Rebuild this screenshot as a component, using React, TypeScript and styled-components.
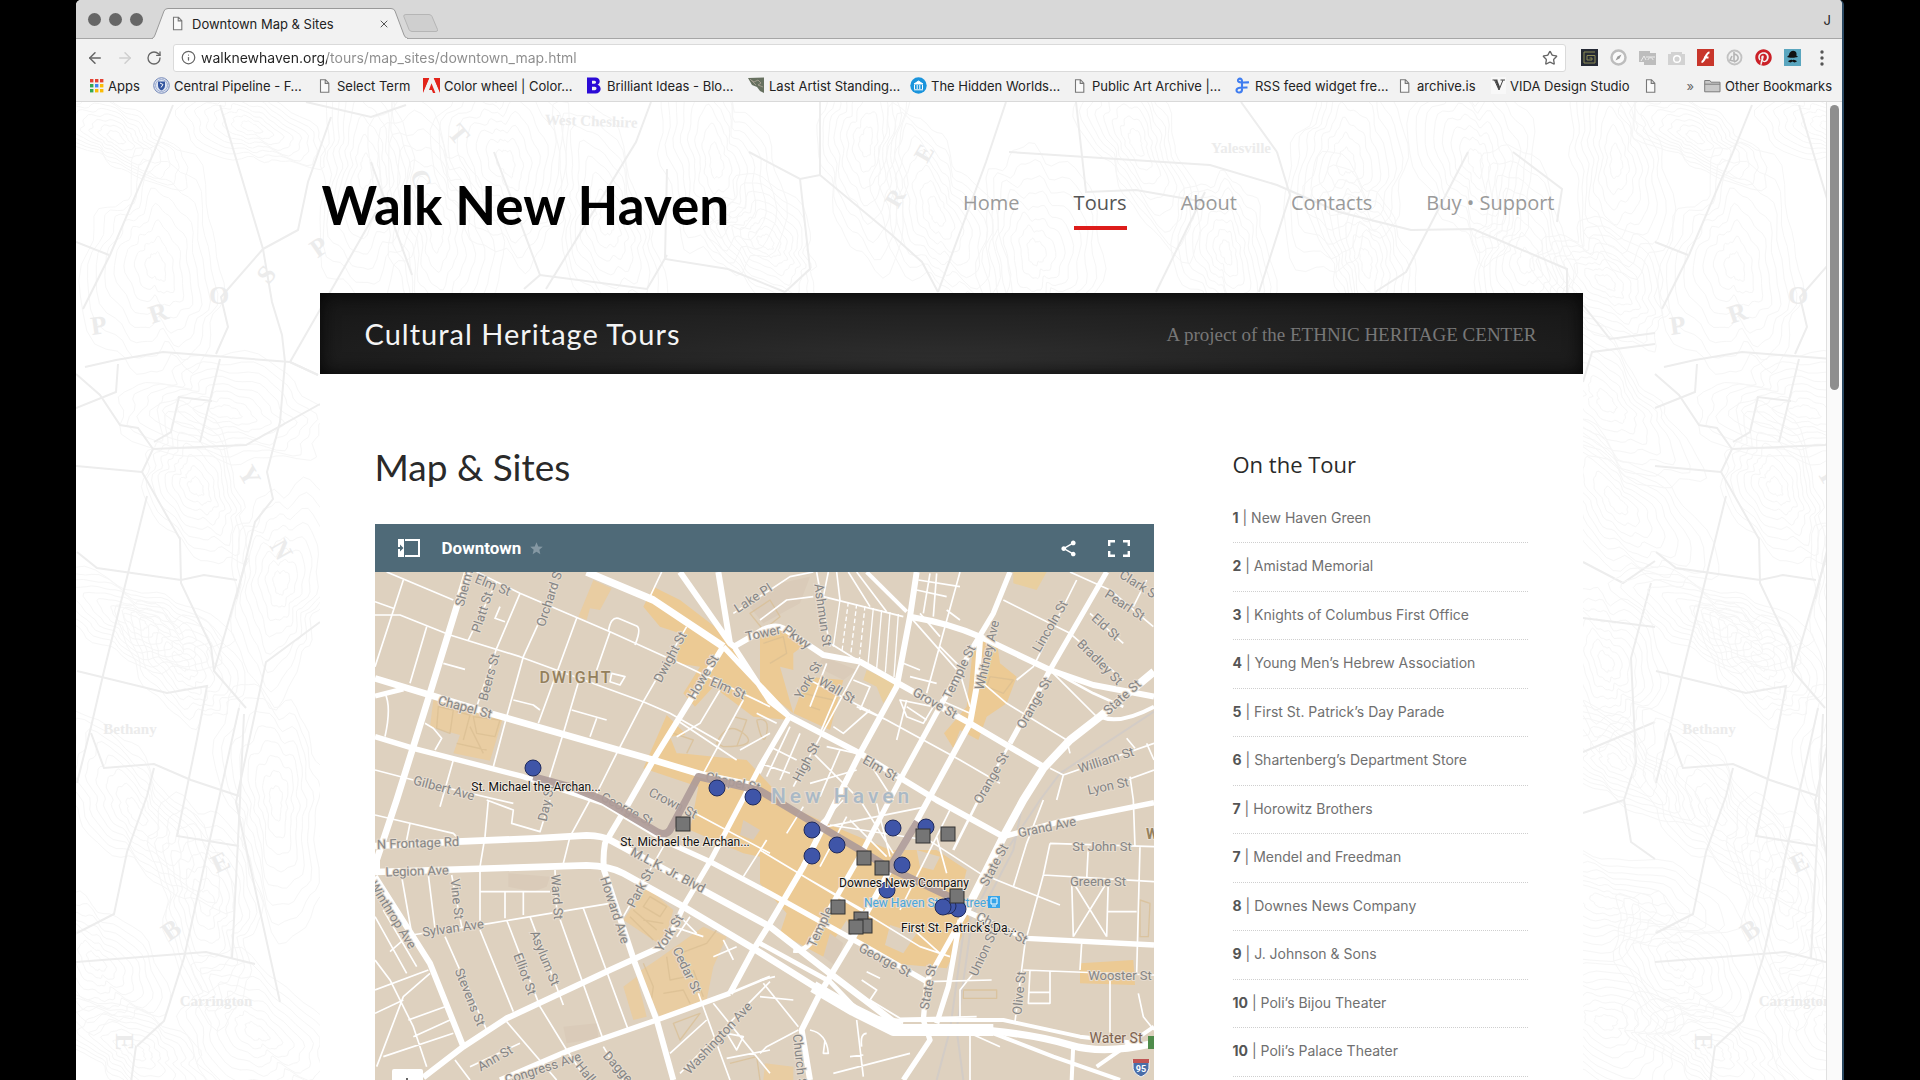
import React from 'react';
import styled, { createGlobalStyle } from 'styled-components';
import { ArrowLeft, ArrowRight, Info, RotateCw, Star, X } from 'lucide-react';
import { FaPinterest } from 'react-icons/fa';
import { MdShare, MdStar } from 'react-icons/md';

const GlobalStyle = createGlobalStyle`
  * { box-sizing: border-box; }
  body { margin: 0; background: #000; font-family: Lato, "Open Sans", sans-serif; }
  h1, h2, h3, p, ol { margin: 0; padding: 0; font-weight: 400; }
  a { color: inherit; text-decoration: none; }
  button { border: 0; padding: 0; background: none; font: inherit; color: inherit; cursor: pointer; }
`;

const ui = 'Inter, "Open Sans", sans-serif';
const site = '"Open Sans", Lato, sans-serif';

/* ---------- browser window ---------- */

const Desktop = styled.div`
  height: 100vh;
  overflow: hidden;
  padding: 0 76px;
  background: #000;
`;

const Window = styled.div`
  height: 100%;
  display: flex;
  flex-direction: column;
  background: #f2f2f2;
  border-right: 2px solid #2c4a63;
  border-radius: 5px 5px 0 0;
  overflow: hidden;
`;

const TabStrip = styled.div`
  height: 39px;
  flex: none;
  display: flex;
  align-items: flex-end;
  background: #d8d8d8;
  border-bottom: 1px solid #a6a6a6;
`;

const Lights = styled.div`
  display: flex;
  gap: 8px;
  align-self: center;
  padding-left: 12px;
  width: 76px;
`;

const Light = styled.button`
  width: 13px;
  height: 13px;
  border-radius: 50%;
  background: #666;
`;

const Tab = styled.div`
  position: relative;
  display: flex;
  align-items: center;
  gap: 6px;
  width: 256px;
  height: 31px;
  margin-bottom: -1px;
  padding: 0 18px 0 17px;
  font: 13px/16px ${ui};
  color: #222;
`;

const TabShape = styled.svg`
  position: absolute;
  inset: 0;
`;

const TabIcon = styled.span`
  position: relative;
  display: flex;
`;

const TabTitle = styled.span`
  position: relative;
  flex: 1;
  white-space: nowrap;
`;

const TabClose = styled.button`
  position: relative;
  display: flex;
  color: #555;
`;

const NewTab = styled.button`
  align-self: center;
  display: flex;
  margin: 8px 0 0 -5px;
`;

const Profile = styled.button`
  margin: 0 11px 8px auto;
  align-self: flex-end;
  font: 13px/20px ${ui};
  color: #222;
`;

const Toolbar = styled.div`
  height: 37px;
  flex: none;
  display: flex;
  align-items: center;
  padding: 0 12px 0 10px;
`;

const ToolButton = styled.button<{ $off?: boolean }>`
  display: flex;
  width: 30px;
  color: ${(p) => (p.$off ? '#cfcfcf' : '#666')};
`;

const Omnibox = styled.label`
  flex: 1;
  display: flex;
  align-items: center;
  gap: 5px;
  height: 28px;
  margin: 0 15px 0 -3px;
  padding: 0 7px;
  background: #fff;
  border: 1px solid #dadada;
  border-radius: 3px;
  color: #666;
`;

const Url = styled.input`
  flex: 1;
  min-width: 0;
  border: 0;
  padding: 0;
  outline: 0;
  font: 14px/20px ${ui};
  background: linear-gradient(90deg, #222 126px, #8c8c8c 126px);
  -webkit-background-clip: text;
  background-clip: text;
  color: transparent;
`;

const Extensions = styled.div`
  display: flex;
  align-items: center;
  gap: 12px;
`;

const Ext = styled.button`
  display: flex;
  justify-content: center;
  width: 17px;
`;

const Bookmarks = styled.nav`
  height: 26px;
  flex: none;
  display: flex;
  align-items: center;
  padding: 0 0 6px 13px;
  border-bottom: 1px solid #d9d9d9;
  font: 13px/18px ${ui};
  color: #222;
`;

const Bookmark = styled.a<{ $w: number }>`
  display: flex;
  align-items: center;
  gap: 4px;
  white-space: nowrap;
  & > svg { flex: none; }
  & > span { width: ${(p) => p.$w}px; margin-right: 11px; }
`;

const Overflow = styled.button`
  margin-left: auto;
  margin-right: 10px;
  color: #666;
`;

const Viewport = styled.div`
  flex: 1;
  min-height: 0;
  display: flex;
  background: #fff;
`;

const Page = styled.main`
  position: relative;
  flex: 1;
  min-width: 0;
  overflow: hidden;
`;

const Backdrop = styled.svg`
  position: absolute;
  inset: 0;
  width: 100%;
  height: 100%;
`;

const Scrollbar = styled.div`
  width: 16px;
  flex: none;
  padding: 3px 3px 0;
  background: #fafafa;
  border-left: 1px solid #e0e0e0;
`;

const Thumb = styled.div`
  width: 9px;
  height: 285px;
  border-radius: 5px;
  background: #8e8e8e;
`;

/* ---------- site ---------- */

const Container = styled.div`
  position: relative;
  max-width: 1263px;
  margin: 0 auto;
  font-family: ${site};
`;

const Header = styled.header`
  display: flex;
  justify-content: space-between;
  align-items: flex-start;
  height: 191px;
  padding: 73px 28px 0 2px;
`;

const Logo = styled.a`
  font: 700 53px/60px Lato, sans-serif;
  color: #000;
`;

const Menu = styled.nav`
  display: flex;
  gap: 54px;
  padding-top: 14px;
`;

const MenuLink = styled.a<{ $active?: boolean }>`
  font: 20px/28px ${site};
  height: 41px;
  color: ${(p) => (p.$active ? '#555' : '#9a9a9a')};
  border-bottom: 4px solid ${(p) => (p.$active ? '#dd1c1a' : 'transparent')};
`;

const Banner = styled.div`
  display: flex;
  align-items: center;
  justify-content: space-between;
  height: 81px;
  padding: 0 46px 0 45px;
  background: radial-gradient(ellipse at 50% 90%, #303030 0%, #242424 40%, #151515 100%);
  box-shadow: inset 0 0 18px #050505;
  & > h2 { font: 29px/40px Lato, sans-serif; color: #f4f4f4; letter-spacing: 1px; }
  & > p { font: 19px/24px "Liberation Serif", serif; color: #777; padding-top: 3px; }
`;

const Content = styled.div`
  display: grid;
  grid-template-columns: 779px 295px;
  justify-content: space-between;
  padding: 68px 55px 0;
  background: #fff;
`;

const PageTitle = styled.h1`
  font: 37px/50px Lato, sans-serif;
  color: #2a2a2a;
  margin-bottom: 32px;
`;

const MapBox = styled.section`
  overflow: hidden;
`;

const MapBar = styled.header`
  display: flex;
  align-items: center;
  height: 48px;
  padding: 0 24px 0 22px;
  background: #4f6a78;
  color: #fff;
  & > h2 { font: 700 17px/24px Roboto, sans-serif; margin: 0 8px 0 21px; }
`;

const BarButton = styled.button<{ $dim?: boolean; $push?: boolean }>`
  display: flex;
  color: ${(p) => (p.$dim ? '#8598a3' : '#fff')};
  margin-left: ${(p) => (p.$push ? 'auto' : '0')};
  margin-right: ${(p) => (p.$push ? '30px' : '0')};
`;

const MapSvg = styled.svg`
  display: block;
  width: 100%;
  height: 560px;
  background: #ded1bf;
  font-family: Roboto, sans-serif;
`;

const Side = styled.aside`
  padding-top: 6px;
  & > h3 { font: 22px/32px ${site}; color: #2a2a2a; margin-bottom: 15px; }
`;

const Stops = styled.ol`
  list-style: none;
`;

const Stop = styled.li`
  height: 48px;
  padding-top: 13px;
  border-bottom: 1px dotted #cfcfcf;
  font: 14px/20px ${ui};
  color: #707070;
  &:nth-child(even) { height: 49px; }
  & b { color: #555; }
`;

/* ---------- icons ---------- */

const DocIcon = ({ h = 14 }: { h?: number }) => (
  <svg width="17" height={h} viewBox="0 0 17 14">
    <path d="M4.5.7h5l3.3 3.4v9.2H4.5zM9.2.9v3.5h3.4" fill="#fafafa" stroke="#777" strokeWidth="1.1" />
  </svg>
);

const AppsIcon = () => (
  <svg width="15" height="15" viewBox="0 0 15 15">
    {['#e34234', '#e34234', '#e34234', '#34a853', '#4285f4', '#fbbc05', '#34a853', '#fbbc05', '#fbbc05'].map((c, i) => (
      <rect key={i} x={(i % 3) * 5 + 1} y={Math.floor(i / 3) * 5 + 1} width="3.4" height="3.4" fill={c} />
    ))}
  </svg>
);

const SealIcon = () => (
  <svg width="17" height="17" viewBox="0 0 17 17">
    <circle cx="8.5" cy="8.5" r="7.8" fill="#dfe5f1" stroke="#7488b8" />
    <circle cx="8.5" cy="8.5" r="6" fill="none" stroke="#9dacd0" />
    <path d="M5 4.5h7v4c0 2.500-1.500 4-3.500 5C6.500 12.500 5 11 5 8.500z" fill="#3355a0" />
    <path d="M7 6l3 1.500-2 3" stroke="#fff" fill="none" />
  </svg>
);

const AdobeIcon = () => (
  <svg width="17" height="15" viewBox="0 0 17 15">
    <path d="M0 0h6.200L0 14zM17 0h-6.200L17 14z" fill="#e2231a" />
    <path d="M8.500 5.300l3.900 9.700H10l-1.200-3H6z" fill="#e2231a" />
    <path d="M0 0h6.200L0 15zM10.800 0H17v15z" fill="#e2231a" />
  </svg>
);

const BIcon = () => (
  <svg width="17" height="17" viewBox="0 0 17 17">
    <path fillRule="evenodd" d="M1 .5h8.500c5 0 5.500 6 2 7.300 4.800 1.500 4.200 8.700-2 8.700H1zM6 3.800v3h2.500c2 0 2-3 0-3zM6 9.800v3.400h2.800c2.300 0 2.300-3.400 0-3.400z" fill="#2b0ad6" />
  </svg>
);

const LeafIcon = () => (
  <svg width="17" height="17" viewBox="0 0 17 17">
    <path d="M0 1l16-.5V16l-4-2-3-4-5-2z" fill="#66705f" />
    <path d="M3 3l3 2 4-2 3 3-3 2 5 2M2 2l6 6" stroke="#a09a8c" fill="none" />
  </svg>
);

const MuseumIcon = () => (
  <svg width="17" height="17" viewBox="0 0 17 17">
    <circle cx="8.500" cy="8.500" r="8.200" fill="#1a94dc" />
    <path d="M4 7l4.500-3L13 7zM4.500 8v4M7.200 8v4M9.800 8v4M12.500 8v4M4 12.800h9" stroke="#fff" fill="#fff" />
  </svg>
);

const FeedIcon = () => (
  <svg width="17" height="17" viewBox="0 0 17 17">
    <path d="M15 5.300C10 5.600 4.500 6.200 4 3.700 3.700 1.200 8 .6 8 4v8.500c0 4-5.500 3.800-5.500.8 0-3 6-2.800 11-2.800" fill="none" stroke="#3f7df0" strokeWidth="2.100" />
  </svg>
);

const FolderIcon = () => (
  <svg width="17" height="14" viewBox="0 0 17 14">
    <path d="M.7 12.800V1.500h5.200l1.200 1.700h8.900v9.600zM.7 5.200h15.300" fill="#c9c9c9" stroke="#7d7d7d" />
  </svg>
);

const VIcon = () => (
  <svg width="15" height="17" viewBox="0 0 15 17">
    <rect width="15" height="17" fill="#f8f8f8" />
    <path d="M1.500 3h5M9.500 3H14M3.500 3l4.500 10L12 3" fill="none" stroke="#444" strokeWidth="1" />
    <path d="M4 3h2.200l2.800 7-1 3z" fill="#444" />
  </svg>
);

const extIcons: [string, React.ReactNode][] = [
  ['Spiral', <svg key="a" width="17" height="17" viewBox="0 0 17 17"><path d="M0 0h17v17H0z" fill="#252a35" /><path d="M14 3H3v11h11V6.500H6v4.500h5V9H8.500" fill="none" stroke="#8c8a55" /></svg>],
  ['Compass', <svg key="b" width="17" height="17" viewBox="0 0 17 17"><circle cx="8.500" cy="8.500" r="7" fill="#fafafa" stroke="#bdbdbd" strokeWidth="2.500" /><path d="M5.500 11.500l2-4 4-2-2 4z" fill="#999" /></svg>],
  ['Gallery', <svg key="c" width="17" height="15" viewBox="0 0 17 15"><path d="M0 1h11v2h6v12H5v-3H0z" fill="#bdbdbd" /><path d="M2 11l3-5 2 4M7 7h9M9 10c0-3 5-3 5 0" stroke="#ededed" fill="none" strokeWidth="1" /></svg>],
  ['Camera', <svg key="d" width="17" height="14" viewBox="0 0 17 14"><path d="M0 3h3V1h11v2h3v11H0z" fill="#d2d2d2" /><circle cx="9" cy="8" r="3.300" fill="none" stroke="#fff" strokeWidth="1.500" /></svg>],
  ['Flash', <svg key="e" width="17" height="17" viewBox="0 0 17 17"><path d="M0 0h17v17H0z" fill="#c8362b" /><path d="M12.500 3.500c-4 0-4.500 9.500-8 9.500M7 8.500h4.500" stroke="#fff" strokeWidth="2.200" fill="none" /></svg>],
  ['Drop', <svg key="f" width="17" height="17" viewBox="0 0 17 17"><circle cx="8.500" cy="8.500" r="7" fill="#f0f0f0" stroke="#c2c2c2" strokeWidth="1.800" /><path d="M8 3v10M8 5c5 1 6 6 0 8M6 7l-2 4 3 1" stroke="#b4b4b4" fill="none" strokeWidth="1.600" /></svg>],
  ['Pinterest', <FaPinterest key="g" size={17} color="#cb2027" />],
  ['Incognito', <svg key="h" width="17" height="17" viewBox="0 0 17 17"><path d="M0 0h17v17H0z" fill="#5aa6bf" /><path d="M5 6c0-5 7-6 7.500-1.500V7l1.500.5c0 1-8 2-11 .5zM4 12c1.500 0 2.500-2 4.500-.8 2-1.200 3 .8 4.500.8-1.500 2-3.500 1.500-4.500.6-1 .9-3 1.400-4.500-.6z" fill="#111" /></svg>],
];

const bookmarks: [React.ReactNode, string, number][] = [
  [<SealIcon key="i" />, 'Central Pipeline - F…', 131],
  [<DocIcon key="i" />, 'Select Term', 75],
  [<AdobeIcon key="i" />, 'Color wheel | Color…', 131],
  [<BIcon key="i" />, 'Brilliant Ideas - Blo…', 130],
  [<LeafIcon key="i" />, 'Last Artist Standing…', 130],
  [<MuseumIcon key="i" />, 'The Hidden Worlds…', 129],
  [<DocIcon key="i" />, 'Public Art Archive |…', 131],
  [<FeedIcon key="i" />, 'RSS feed widget fre…', 130],
  [<DocIcon key="i" />, 'archive.is', 63],
  [<VIcon key="i" />, 'VIDA Design Studio', 121],
];

/* ---------- faint survey map behind the page ---------- */

const surveyRoads = [
  'M97 3L78 50 34 153 7 207', 'M144 3L187 147 196 200 206 233 209 260 204 320 191 370 197 397 179 420 160 497',
  'M9 265L40 258 87 250 214 260 242 273', 'M0 272L24 293 44 323 62 326 77 347 66 370 104 437 105 481 135 544 138 569 170 606',
  'M71 394L28 569 15 625 1 681', 'M1 450L21 466 105 478 128 473 161 478', 'M1 569L91 591 131 584 121 637 101 734 163 744',
  'M171 456L138 569', 'M163 606L138 719 108 856 88 919 61 944', 'M168 612L163 719 156 856', 'M15 631L28 666 78 662 115 678 163 694',
  'M78 666L71 694 51 750 38 812 1 831', 'M0 364L66 370M77 347L170 343 244 302', 'M144 257L124 340M136 299L103 295 95 330 78 340',
  'M187 147L145 195 152 225 140 252M187 147L222 128 232 80 255 15', 'M242 273L214 260 300 110', 'M0 306L40 290 42 262', 'M0 140L33 153',
  'M673 50L724 77 744 73 816 133 846 160 862 190', 'M724 77L734 167 709 190', 'M591 67L589 157 652 167 709 190',
  'M448 187L464 173 571 187 591 153', 'M295 60L336 173M230 0L295 15 330 3', 'M418 50L464 173', 'M744 73V0', 'M470 187L560 40 575 0',
  'M933 50L1134 63 1201 83 1263 110 1335 128 1397 127 1491 167 1491 240', 'M1129 90L1080 190', 'M1201 50L1214 93 1183 190M1165 0L1201 50',
  'M1392 50L1330 170 1299 190', 'M1437 50L1486 87 1481 120', 'M862 190L910 60 930 0', 'M1000 0L1010 90 1060 88 1129 100',
  'M1507 203L1534 237 1579 231M1507 280L1516 250 1579 242', 'M1507 460L1547 481 1579 459M1507 516L1579 525M1575 481L1555 556 1560 660 1548 698 1507 711',
  'M1548 698L1555 740 1579 757M1507 650L1579 620', 'M0 860L130 850 179 862M60 944L55 980', 'M204 900L160 700 190 560 244 520',
];

const hills: [number, number, number, number][] = [
  [40, 35, 40, 0.4], [175, 25, 42, 0.5], [80, 165, 72, 1.4], [290, 70, 66, 1.5], [150, 310, 60, 0.3], [120, 385, 50, 1],
  [60, 520, 50, 0.4], [105, 560, 46, 1], [205, 480, 60, 1.5], [60, 710, 60, 0.9], [20, 860, 52, 1], [130, 800, 60, 1.2],
  [200, 700, 64, 1.5], [180, 930, 60, 0.8], [60, 950, 50, 0.4], [360, 130, 70, 1.5], [430, 60, 66, 1.4], [530, 120, 60, 1.2],
  [640, 60, 66, 1.5], [690, 140, 46, 0.8], [790, 40, 60, 1.5], [860, 110, 60, 1.3], [960, 150, 66, 1.4], [1060, 40, 56, 1.1],
  [1150, 150, 50, 1.5], [1270, 60, 66, 1.5], [1290, 160, 56, 1.3], [1400, 60, 60, 1.5], [1450, 160, 60, 1.2], [1540, 60, 62, 1.5],
  [1530, 180, 50, 0.8], [1530, 300, 60, 0.7], [1540, 400, 62, 0.9], [1530, 560, 52, 1.3], [1540, 660, 48, 0.5], [1530, 800, 64, 0.3], [1530, 920, 56, 0.4],
];

const contour = ([cx, cy, size, turn]: [number, number, number, number], ring: number, seed: number) => {
  const r = size * (0.16 + ring * 0.15);
  let d = '';
  for (let i = 0; i <= 60; i++) {
    const a = (i / 60) * Math.PI * 2;
    const wob = 1 + 0.2 * Math.sin(a * 2 + seed * 1.3 + ring * 0.15) + 0.12 * Math.sin(a * 3 + seed)
      + 0.07 * Math.sin(a * 7 + seed * 2 + ring * 0.6) + 0.04 * Math.sin(a * 13 + seed * 3 + ring * 1.1);
    const px = Math.cos(a) * r * wob * 1.4;
    const py = Math.sin(a) * r * wob * 0.7;
    const x = cx + px * Math.cos(turn) - py * Math.sin(turn);
    const y = cy + px * Math.sin(turn) + py * Math.cos(turn);
    d += `${i ? 'L' : 'M'}${x.toFixed(1)} ${y.toFixed(1)}`;
  }
  return d;
};

const surveyLetters: [string, number, number, number, number][] = [
  ['P', 24, 232, 26, -8], ['R', 85, 219, 26, -18], ['O', 143, 202, 26, 0], ['S', 197, 178, 26, -50], ['P', 248, 152, 26, -35],
  ['C', 337, 80, 26, 70], ['T', 376, 38, 26, 50], ['Y', 166, 378, 26, 60], ['N', 198, 452, 26, 60],
  ['E', 40, 940, 26, 90], ['B', 100, 835, 26, -35], ['E', 148, 768, 26, -25], ['West Cheshire', 515, 24, 15, 2],
  ['Yalesville', 1165, 51, 15, 0], ['Bethany', 54, 632, 15, 0], ['Carrington', 140, 904, 15, 0], ['E', 855, 55, 24, -60], ['R', 826, 100, 24, -60],
];

const SurveyTile = () => (
  <g id="survey">
    {hills.map((h, s) => [0, 1, 2, 3, 4, 5, 6, 7].map((k) => (
      <path key={`${s}-${k}`} d={contour(h, k, s * 1.7)} fill="none" stroke="#f6f6f6" />
    )))}
    {surveyRoads.map((d) => <path key={d} d={d} fill="none" stroke="#ededed" strokeWidth="2" />)}
    {surveyLetters.map(([t, x, y, s, a], i) => (
      <text key={i} x={x} y={y} fontSize={s} fontWeight="700" textAnchor="middle" fill="#ececec" fontFamily="Liberation Serif, serif" transform={`rotate(${a} ${x} ${y})`}>{t}</text>
    ))}
  </g>
);

/* ---------- street map ---------- */

const blocks: [string, string][] = [
  ['#ecca94', 'M850 200L930 240 1060 340 1180 500 1258 580V600L1150 590 1030 500 975 560 940 520 990 440 920 430 930 340 870 320 820 260z'],
  ['#ecca94', 'M890 585L945 640 930 700 1130 720 1260 860 1370 910 1560 990H1700L1790 1050 1770 1130 1800 1200 1730 1345 1560 1330 1480 1290 1430 1200 1360 1310 1230 1240 1250 1180 1170 1090V1010L1120 1000 960 930 985 800 820 745z'],
  ['#ecca94', 'M1170 350L1250 320 1310 370 1270 400V450L1230 440 1270 580 1170 500z'],
  ['#ecca94', 'M1310 470L1420 480 1380 630 1270 580z'],
  ['#e9cf9f', 'M1490 450L1580 490 1540 550 1520 500 1480 480z'],
  ['#ecca94', 'M1810 370L1880 360 1890 430 1940 470 1910 550 1850 590 1825 660 1770 630 1750 685 1722 640 1790 560 1800 470z'],
  ['#e9cf9f', 'M1930 156H2030L2000 210 1930 190z'],
  ['#e9cda2', 'M670 180L725 205 690 270 660 265 650 300 625 290z'],
  ['#e9cda2', 'M190 540L400 590 360 722 250 700 270 645 180 620z'],
  ['#e9cda2', 'M830 1100L910 1170 880 1280 760 1200z'],
  ['#e9cda2', 'M860 1320L1000 1220 1070 1250 1030 1340 1010 1440 870 1490 800 1360z'],
  ['#e9cda2', 'M760 1400L800 1370 830 1490 790 1500z'],
  ['#ecca94', 'M2130 1330L2290 1320 2295 1395 2130 1390z'],
  ['#e9cda2', 'M1185 1630L1270 1640V1680H1180z'],
  ['#dacbb9', 'M415 1060L540 1070 530 1100 490 1115 415 1100zM580 1520L680 1510 685 1555 590 1570zM1120 900L1170 930 1150 960 1110 945zM1380 1240L1420 1270 1400 1340 1360 1310zM1210 70L1290 90M1130 250L1230 190 1320 170 1290 250 1180 310zM1360 410L1460 450 1420 480 1340 440z'],
  ['#ded1bf', 'M1560 1215L1640 1240 1600 1300 1545 1275zM1640 990L1710 1010 1690 1050 1650 1040zM900 650L990 640 970 700 920 700z'],
];

const trunk: [number, string][] = [
  [22, 'M650 156L850 240 1060 380'],
  [18, 'M930 156L1080 370M1045 156L1080 370 1100 385'],
  [16, 'M1060 380L1258 590M1095 385L1200 545 1258 590'],
  [18, 'M1258 590L1470 700 1700 840 1900 950'],
  [18, 'M1095 378L1170 335Q1210 310 1240 325L1360 405 1470 425 1585 490 1800 610 2020 740'],
  [18, 'M1060 380L850 720 770 860 705 970Q698 1010 702 1050L795 1330 860 1500 910 1680'],
  [20, 'M292 156L180 520 80 840 20 1020V1060'],
  [20, 'M15 475L180 525 360 580 850 720 1000 765 1170 800'],
  [15, 'M100 507L15 528'],
  [16, 'M15 650L130 685 460 770 700 850 900 970 1020 1025 1200 1120 1470 1270 1670 1385'],
  [16, 'M1258 590L1170 740 1020 1025 940 1160 900 1250 870 1285'],
  [20, 'M15 978L260 965 500 955 650 946Q700 948 720 960L1200 1220 1380 1360 1590 1520'],
  [20, 'M15 1056L650 1036Q720 1038 760 1060L940 1160 1150 1285 1350 1410 1570 1530'],
  [36, 'M1330 1400L1450 1470 1570 1530H1870'],
  [14, 'M1170 1270L1380 1385 1480 1490 1600 1505'],
  [22, 'M1860 1532Q2000 1545 2100 1575T2352 1570'],
  [12, 'M1590 1500L1900 1500 2130 1550 2352 1575M1870 1540L2050 1610 2250 1680M2110 1570L2105 1680M2180 1640L2352 1520'],
  [18, 'M1640 156L1620 290 1580 500 1470 700 1410 820 1300 1040 1200 1210 1150 1290 1080 1420'],
  [16, 'M1920 156L1870 280 1810 380 1710 560 1590 780 1480 990 1320 1270Q1300 1295 1270 1290'],
  [18, 'M1830 360L1820 500 1800 610 1680 830 1440 1270 1350 1420 1295 1530 1320 1680'],
  [18, 'M1620 290Q1740 310 1830 350L2040 450 2170 495 2352 530'],
  [8, 'M2060 460L2170 520 2260 560'],
  [16, 'M2210 156L2040 450 1920 670'], [8, 'M1920 670L1820 850 1750 990'],
  [24, 'M2352 455L2190 590 2100 660 2020 745 1960 840 1900 950 1790 1170'],
  [16, 'M1790 1170L1670 1385 1660 1500 1680 1560 1600 1680M1770 1200L1735 1400 1700 1510'],
  [16, 'M1900 950L2070 905 2352 848'], [12, 'M2190 590Q2250 615 2352 560'],
  [16, 'M1780 1170L1970 1255 2352 1275'],
  [18, 'M160 1672L280 1580 410 1495 720 1350 870 1282'],
  [16, 'M390 1680L600 1590 860 1500 1080 1420'], [8, 'M1080 1420L1200 1370'],
  [18, 'M15 1070L180 1330 280 1580'],
];

const lanes: [number, number, string][] = [
  [0, 0, 'M50 156L250 240M100 180L15 440M15 245L70 265M15 285H90L240 345 450 410 600 465 820 545 900 580 1050 665M320 156L450 220 720 335 940 435 1200 560M170 320L120 490M450 220L380 385 320 560M380 185L295 360M560 190L460 410 410 590 370 740M620 295L505 610M720 335L680 450M715 335Q722 290 745 295L800 318Q815 325 795 375M950 320L820 545 740 700 670 840M630 470L580 640 530 800M430 540L490 555 510 570M605 570L710 600M680 595L660 650M875 156L840 230M220 430L285 448M45 520Q65 560 45 650M15 750L130 780 430 850M250 720L210 860M165 610L190 625 215 655 195 690M1090 280L1200 210 1260 170 1330 156M1050 510L990 610 920 650M920 600L1100 720M1120 540L1000 760M390 260L375 295 405 305M725 460L765 470 750 495 720 485zM1160 580L1220 610M1200 640L1110 690'],
  [0, 840, 'M15 45L250 100 265 115M120 70L110 120M355 0L345 110 330 200V370M350 0L430 30 425 70 510 95 540 0M660 0L600 110 580 190M95 230L125 400M175 225L195 385M245 225L275 380M125 405L360 370 720 310M330 275H540M405 275V355M460 275V345M555 210L560 330 700 720M640 325L775 690M480 350L580 615M410 360L510 620 590 750 650 840M330 390L430 635M225 410L350 690M410 665L560 840M255 780L300 840M300 800L450 730M700 740L760 840M760 350L880 140M15 350L110 520M40 330L140 500M15 480L60 540 130 680 170 800M15 570L175 510M60 455L100 420M115 660L225 620M130 710L240 660M40 770L250 700M900 760L1010 660M1030 610L1200 820M985 580L1080 840M1070 775L1200 750M1200 545L930 820M975 40L1200 160M1190 120L1120 230M180 520L100 590 20 800M15 640L100 600M910 380L1000 410M940 360L980 400M960 350L920 410M1030 470L1100 440M1060 420L1090 480M1070 700L1100 750 1120 710z'],
  [1170, 0, 'M170 156L210 380M190 230L430 290M210 370L300 425M205 156L190 230M230 156L240 240M265 156L330 260M290 156L380 275M200 430L150 560M300 430L100 800M130 470L380 600 600 720 720 790M730 240L930 340 1090 480M950 180L820 440 770 480M880 460L1020 600M930 156L1050 210 1180 320M990 280L1090 370M1160 180L1120 260M600 156L500 520M470 210L560 230M475 180L600 200M510 160L490 280M530 160L520 290M450 290L600 460 630 560M670 490L740 550 920 660 930 700M1182 670L910 765 890 840M870 745L910 765M1110 770L1120 840M1182 750L1100 780M1160 670L1182 720M1100 655L1125 685M0 300L80 240 160 230M540 540L630 580M440 540L410 660M280 480L330 500 300 570M380 600L290 560M330 570L250 640 220 620M240 500L180 640M200 680L290 700M160 700L280 820M240 690L180 830M290 750L150 790M310 700L400 840M420 540L520 560 490 610 440 590zM440 560L500 600M430 430L480 450M450 470L530 490M540 380L600 440M480 280L540 350M560 270L600 300M60 630L0 760M90 620L20 770M120 640L60 780M30 680L110 720M0 730L90 760'],
  [1170, 840, 'M0 150L300 330 480 440 570 470M210 75L500 120M200 80L500 20M300 0L400 160M350 10L390 170M270 60L380 170M250 0L150 100M130 20L80 100M570 30L420 330M490 110L660 220 760 260 900 315M530 110L560 220M850 0L800 130 760 260M850 225L1182 245M870 130L1182 140M870 130L850 225 795 430 765 665M985 140L980 240M1140 140L1130 520M1120 0L1125 140M935 240L940 410M1045 240L1040 410M935 240L1040 410M1045 240L940 410M965 430L960 510M790 510L1182 525M810 510L805 610H870V515M805 577H870M1050 530V700M1040 335H1130M500 545L695 540M640 520L600 570V650M0 540L45 530M10 550L115 680M290 660L310 830M115 690L20 740 0 760M320 515L360 535M305 540L350 570 330 600 420 655 650 650M630 700V840M630 700L720 740M270 770L310 765M450 760L220 820M320 700Q300 700 305 740M150 690Q200 700 205 760H190L195 720M1135 580L1150 650 1182 690M0 590L100 600M150 240L310 330M180 200L260 50M440 370L540 460'],
];

const buildings = 'M205 560L250 570 240 640 200 625zM260 575L300 585 280 660M310 590L390 600 375 650 320 640zM260 670L350 690M300 620L340 700M840 1130L890 1160 870 1190 820 1160zM790 1170L860 1230M780 1190L850 1260M820 1200L880 1210M820 1330L850 1400 840 1470M890 1310L900 1380 950 1370M930 1300L1010 1270 1040 1230M970 1350L1000 1430M880 1420L940 1410 960 1450M1300 520L1390 540 1370 610M1320 560L1350 570M1860 470L1930 480 1900 520 1850 500zM1180 370L1240 350 1250 400 1200 430M1140 280L1200 240 1230 290 1180 330zM2310 1140L2340 1150 2335 1250 2310 1250zM1780 1410H1880V1435H1780zM910 1510L990 1480 930 1560zM1080 1630L1160 1610 1170 1680M910 640L970 660 950 700M1090 590L1130 600 1100 680M1040 670Q1070 600 1120 640T1060 680zM1160 600Q1200 590 1190 640T1160 600';

const route = 'M490 770L600 800 700 840 860 935Q885 950 900 930L985 770 1170 812 1300 890 1470 990 1560 1045 1760 1140M1558 1045L1642 905';

type Label = [string, number, number, number];

const streets: Label[] = [
  ['Sherm', 283, 203, -75], ['Elm St', 370, 194, 22], ['Platt St', 335, 275, -72], ['Orchard S', 538, 238, -72], ['Beers St', 357, 470, -75],
  ['Chapel St', 285, 560, 15], ['Dwight St', 900, 412, -62], ['Howe St', 998, 472, -60], ['Elm St', 1075, 505, 23], ['Lake Pl', 1150, 235, -33],
  ['Gilbert Ave', 222, 805, 15], ['Crown St', 908, 850, 27], ['Tower', 1180, 340, -12], ['Pkwy', 1280, 350, 36], ['Chapel St', 1090, 785, 12],
  ['George St', 770, 868, 28], ['Day St', 528, 850, -78], ['N Frontage Rd', 145, 970, -2], ['Legion Ave', 142, 1053, -2],
  ['Winthrop Ave', 70, 1185, 58], ['Vine St', 262, 1137, 84], ['Ward St', 560, 1132, 86], ['Sylvan Ave', 250, 1225, -8], ['Howard Ave', 735, 1170, 72],
  ['Park St', 810, 1105, -62], ['M.L.K. Jr. Blvd', 895, 1050, 28], ['York St', 897, 1240, -58], ['Cedar St', 950, 1350, 64], ['Asylum St', 525, 1315, 68],
  ['Elliot St', 465, 1362, 70], ['Stevens St', 300, 1430, 68], ['Ann St', 375, 1615, -30], ['Congress Ave', 520, 1645, -18], ['Hallo', 655, 1665, 50],
  ['Dagge', 745, 1640, 48], ['Washington Ave', 1045, 1555, -47], ['Ashmun St', 1358, 285, 82], ['York St', 1313, 480, -60], ['Wall St', 1400, 510, 30],
  ['Grove St', 1695, 550, 30], ['Temple St', 1768, 455, -64], ['Whitney Ave', 1850, 405, -77], ['Lincoln St', 2040, 318, -60], ['Clark S', 2305, 192, 32],
  ['Pearl St', 2265, 255, 33], ['Eld St', 2208, 320, 42], ['Bradley St', 2190, 425, 45], ['State St', 2257, 530, -42], ['Orange St', 1992, 550, -60],
  ['Orange St', 1862, 775, -60], ['High St', 1307, 725, -62], ['Elm St', 1530, 745, 30], ['William St', 2207, 720, -18], ['Lyon St', 2215, 797, -12],
  ['Temple', 1350, 1220, -65], ['George St', 1545, 1320, 28], ['State St', 1873, 1035, -62], ['Grand Ave', 2030, 920, -12], ['St John St', 2195, 978, 0],
  ['Greene St', 2183, 1083, 0], ['Chapel St', 1895, 1225, 27], ['Union St', 1840, 1300, -65], ['Olive St', 1948, 1418, -84], ['State St', 1675, 1400, -80],
  ['Wooster St', 2250, 1365, 0], ['Church S', 1290, 1620, 84],
];

const pins: [number, number][] = [
  [488, 745], [1040, 805], [1150, 832], [1325, 930], [1402, 975], [1327, 1008], [1570, 925], [1668, 922], [1596, 1035], [1550, 1110],
  [1763, 1168], [1733, 1157], [1718, 1160],
];
const squares: [number, number][] = [
  [940, 912], [1660, 947], [1733, 942], [1483, 1015], [1537, 1045], [1403, 1160], [1472, 1197], [1485, 1218], [1457, 1221], [1760, 1128],
];
const places: Label[] = [
  ['St. Michael the Archan...', 498, 808, 0], ['St. Michael the Archan...', 946, 972, 0], ['Downes News Company', 1603, 1095, 0], ["First St. Patrick's Da...", 1768, 1230, 0],
];

const mx = (u: number) => Math.round((u - 15) / 3);
const my = (u: number) => Math.round((u - 156) / 3);

const MapText = styled.text<{ $size?: number; $fill?: string; $halo?: string; $weight?: number; $track?: number }>`
  font-size: ${(p) => p.$size ?? 13}px;
  font-weight: ${(p) => p.$weight ?? 400};
  letter-spacing: ${(p) => p.$track ?? 0}px;
  fill: ${(p) => p.$fill ?? '#858585'};
  stroke: ${(p) => p.$halo ?? '#e6dccf'};
  stroke-width: 2px;
  paint-order: stroke;
  text-anchor: middle;
  dominant-baseline: central;
`;

const StreetMap = () => (
  <MapSvg role="img" aria-label="Map of downtown New Haven">
    <g transform="scale(.33333) translate(-15 -156)" strokeLinejoin="round">
      {blocks.map(([c, d]) => <path key={d} d={d} fill={c} />)}
      <path d={buildings} fill="none" stroke="#d9bd92" strokeWidth="4" opacity=".7" />
      <path d="M2352 575L2070 760 2010 840 1910 990 1780 1240 1740 1530 1700 1680M1960 840L1930 990 1800 1240 1760 1530 1780 1680" fill="none" stroke="#d3ccc6" strokeWidth="6" />
      {[0, 1, 2, 3, 4, 5, 6, 7].map((i) => (
        <path key={i} d={`M${1410 + i * 25} ${240 + i * 6}L${1390 + i * 26} ${380 + i * 13}`} stroke="#fff" strokeWidth="4" strokeDasharray={i > 0 && i < 4 ? '14 8' : undefined} />
      ))}
      {lanes.map(([x, y, d]) => <path key={d} transform={`translate(${x} ${y})`} d={d} fill="none" stroke="#fff" strokeWidth="5" />)}
      {trunk.map(([w, d]) => <path key={d} d={d} fill="none" stroke="#fff" strokeWidth={w} />)}
      <path d="M1490 156L1610 275" stroke="#fff" strokeWidth="12" />
    </g>
    {streets.map(([t, x, y, a], i) => (
      <MapText key={i} x={mx(x)} y={my(y)} transform={`rotate(${a} ${mx(x)} ${my(y)})`}>{t}</MapText>
    ))}
    <g transform="scale(.33333) translate(-15 -156)">
      <path d={route} fill="none" stroke="#ae9c99" strokeWidth="22" strokeLinejoin="round" opacity=".93" />
    </g>
    <MapText x={mx(617)} y={my(472)} $size={16} $fill="#94805c" $weight={500} $track={2}>DWIGHT</MapText>
    <MapText x={mx(1416)} y={my(828)} $size={21} $fill="#aab9c6" $weight={500} $track={4}>New Haven</MapText>
    <MapText x={mx(2237)} y={my(1555)} $size={14} $fill="#7d6250">Water St</MapText>
    <MapText x={mx(2345)} y={my(942)} $size={14} $fill="#94805c" $weight={700}>W</MapText>
    <MapText x={mx(1670)} y={my(1148)} $size={12} $fill="#4aa6dc">New Haven State Street</MapText>
    <g transform="translate(613 324)">
      <rect width="12" height="12" fill="#36a5ea" />
      <path d="M3 2h6v6H3zM4 10h4" fill="none" stroke="#fff" />
    </g>
    <rect x="773" y="464" width="6" height="13" fill="#4f8b4b" />
    <g transform="translate(757 487)">
      <path d="M1 1h16v5q1 8-8 12Q0 14 1 6z" fill="#4a6ea9" stroke="#f4f4f4" />
      <path d="M1 0h16v4H1z" fill="#c05454" />
      <text x="9" y="13" fontSize="9" fontWeight="700" fill="#fff" textAnchor="middle">95</text>
    </g>
    {pins.map(([x, y], i) => <circle key={i} cx={mx(x)} cy={my(y)} r="8" fill="#3f55a8" stroke="#1f2a5c" />)}
    {squares.map(([x, y], i) => <rect key={i} x={mx(x) - 7} y={my(y) - 7} width="14" height="14" fill="#757575" stroke="#333" />)}
    {places.map(([t, x, y], i) => (
      <MapText key={i} x={mx(x)} y={my(y) - 2} $size={12} $fill="#111" $halo="#f2eae0">{t}</MapText>
    ))}
    <rect x="17" y="497" width="31" height="60" rx="2" fill="#fff" />
    <path d="M32 506v10M27 511h10" stroke="#666" strokeWidth="2" />
  </MapSvg>
);

const stops: [number, string][] = [
  [1, 'New Haven Green'], [2, 'Amistad Memorial'], [3, 'Knights of Columbus First Office'], [4, 'Young Men’s Hebrew Association'],
  [5, 'First St. Patrick’s Day Parade'], [6, 'Shartenberg’s Department Store'], [7, 'Horowitz Brothers'], [7, 'Mendel and Freedman'],
  [8, 'Downes News Company'], [9, 'J. Johnson & Sons'], [10, 'Poli’s Bijou Theater'], [10, 'Poli’s Palace Theater'],
];

export default function App() {
  return (
    <Desktop>
      <GlobalStyle />
      <Window>
        <TabStrip>
          <Lights>
            <Light aria-label="Close" /><Light aria-label="Minimise" /><Light aria-label="Zoom" />
          </Lights>
          <Tab>
            <TabShape width="256" height="31" viewBox="0 0 256 31">
              <path d="M0 30.500Q2 30 3 27L12 3Q13 .5 16 .5H239Q242 .5 243 3L252 27Q253 30 256 30.500V31H0z" fill="#f2f2f2" stroke="#999" />
              <path d="M1 31H255" stroke="#f2f2f2" strokeWidth="2" />
            </TabShape>
            <TabIcon><DocIcon h={15} /></TabIcon>
            <TabTitle>Downtown Map &amp; Sites</TabTitle>
            <TabClose aria-label="Close tab"><X size={12} /></TabClose>
          </Tab>
          <NewTab aria-label="New tab">
            <svg width="36" height="18" viewBox="0 0 36 18"><path d="M3 .5h23q2 0 3 2l5.500 13q.5 2-1.500 2H9q-2 0-3-2L.8 2.500q-.5-2 2.200-2z" fill="#cfcfcf" stroke="#b5b5b5" /></svg>
          </NewTab>
          <Profile>J</Profile>
        </TabStrip>
        <Toolbar>
          <ToolButton aria-label="Back"><ArrowLeft size={18} /></ToolButton>
          <ToolButton aria-label="Forward" $off><ArrowRight size={18} /></ToolButton>
          <ToolButton aria-label="Reload"><RotateCw size={16} /></ToolButton>
          <Omnibox>
            <Info size={15} />
            <Url aria-label="Address" defaultValue="walknewhaven.org/tours/map_sites/downtown_map.html" />
            <Star size={16} />
          </Omnibox>
          <Extensions>
            {extIcons.map(([n, icon]) => <Ext key={n} aria-label={n}>{icon}</Ext>)}
            <Ext aria-label="Menu">
              <svg width="4" height="16" viewBox="0 0 4 16" fill="#555"><circle cx="2" cy="2" r="1.700" /><circle cx="2" cy="8" r="1.700" /><circle cx="2" cy="14" r="1.700" /></svg>
            </Ext>
          </Extensions>
        </Toolbar>
        <Bookmarks aria-label="Bookmarks">
          <Bookmark href="#apps" $w={34}><AppsIcon /><span>Apps</span></Bookmark>
          {bookmarks.map(([icon, t, w]) => <Bookmark key={t} href="#bookmark" $w={w}>{icon}<span>{t}</span></Bookmark>)}
          <DocIcon />
          <Overflow>»</Overflow>
          <Bookmark href="#other" $w={106}><FolderIcon /><span>Other Bookmarks</span></Bookmark>
        </Bookmarks>
        <Viewport>
          <Page>
            <Backdrop aria-hidden="true">
              <SurveyTile />
              <use href="#survey" x="1579" />
            </Backdrop>
            <Container>
              <Header>
                <Logo href="#home">Walk New Haven</Logo>
                <Menu>
                  <MenuLink href="#home">Home</MenuLink>
                  <MenuLink href="#tours" $active>Tours</MenuLink>
                  <MenuLink href="#about">About</MenuLink>
                  <MenuLink href="#contacts">Contacts</MenuLink>
                  <MenuLink href="#support">Buy • Support</MenuLink>
                </Menu>
              </Header>
              <Banner>
                <h2>Cultural Heritage Tours</h2>
                <p>A project of the ETHNIC HERITAGE CENTER</p>
              </Banner>
              <Content>
                <div>
                  <PageTitle>Map &amp; Sites</PageTitle>
                  <MapBox>
                    <MapBar>
                      <BarButton aria-label="Toggle legend">
                        <svg width="24" height="18" viewBox="0 0 24 18">
                          <path d="M8 1h14v16H8" fill="none" stroke="#fff" strokeWidth="2" />
                          <path d="M1 0h6v18H1z" fill="#fff" />
                          <path d="M0 8h3V5.500L6.500 9 3 12.500V10H0z" fill="#4f6a78" />
                        </svg>
                      </BarButton>
                      <h2>Downtown</h2>
                      <BarButton aria-label="Star this map" $dim><MdStar size={15} /></BarButton>
                      <BarButton aria-label="Share" $push><MdShare size={19} /></BarButton>
                      <BarButton aria-label="Full screen">
                        <svg width="22" height="17" viewBox="0 0 22 17"><path d="M1.200 6V1.200H7M15 1.200h5.800V6M20.800 11v4.800H15M7 15.800H1.200V11" fill="none" stroke="#fff" strokeWidth="2.400" /></svg>
                      </BarButton>
                    </MapBar>
                    <StreetMap />
                  </MapBox>
                </div>
                <Side>
                  <h3>On the Tour</h3>
                  <Stops>
                    {stops.map(([n, t]) => <Stop key={t}><a href="#stop"><b>{n}</b> | {t}</a></Stop>)}
                  </Stops>
                </Side>
              </Content>
            </Container>
          </Page>
          <Scrollbar><Thumb /></Scrollbar>
        </Viewport>
      </Window>
    </Desktop>
  );
}
